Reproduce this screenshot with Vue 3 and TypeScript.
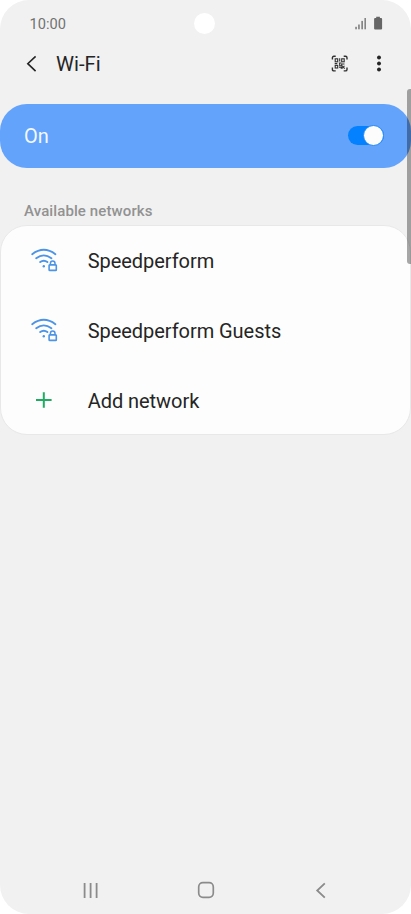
<script setup lang="ts">
import { ref } from 'vue'

interface Network {
  name: string
}

const wifiOn = ref<boolean>(true)
const networks: Network[] = [{ name: 'Speedperform' }, { name: 'Speedperform Guests' }]
</script>

<template>
  <main class="phone">
    <div class="status">
      <span class="time">10:00</span>
      <span class="camera"></span>
      <svg class="status-icons" width="30" height="16" viewBox="354 15.5 30 16">
        <g fill="#858585">
          <rect x="355.2" y="26.3" width="1.7" height="2.5" />
          <rect x="358.1" y="24" width="1.7" height="4.8" />
          <rect x="361.3" y="20.4" width="1.7" height="8.4" />
          <rect x="364.4" y="17.5" width="1.6" height="11.3" />
        </g>
        <path d="M376.2 16.3h3.7v1.2h1.2q1 0 1 1v9.4q0 1-1 1h-6q-1 0-1-1v-9.4q0-1 1-1h1.1z" fill="#666" />
      </svg>
    </div>

    <header class="header">
      <svg class="back" width="12" height="18" viewBox="26 55 12 18">
        <path d="M35.6 56.3 27.8 63.7 35.6 71.1" fill="none" stroke="#252525" stroke-width="1.6" />
      </svg>
      <h1>Wi-Fi</h1>
      <svg class="qr" width="16" height="16" viewBox="0.3 0.4 16 16">
        <g fill="none" stroke="#303030" stroke-width="1.4">
          <path d="M.7 4V2.2Q.7.7 2.2.7H4M12 .7h1.8q1.5 0 1.5 1.5V4M15.3 12v1.8q0 1.5-1.5 1.5H12M4 15.3H2.2q-1.5 0-1.5-1.5V12" />
          <g stroke-width="1.1">
            <rect x="3.5" y="3.2" width="2.5" height="3" />
            <rect x="10" y="3.2" width="2.5" height="3" />
            <rect x="3.5" y="9.8" width="2.5" height="2.6" />
            <path d="M8 2.6v3.2M7.2 7.4h2.4M3 8h2.6M8 8v2.2h2V8.4h2.8M7.3 11.6h2.2v1.6M10.5 10v3.1M12.8 10.2l-1.4 1.2 1.6 1.6" />
          </g>
        </g>
      </svg>
      <svg class="more" width="6" height="18" viewBox="0 0.3 6 18" fill="#252525">
        <circle cx="3" cy="2.8" r="1.95" />
        <circle cx="3" cy="8.8" r="1.95" />
        <circle cx="3" cy="14.8" r="1.95" />
      </svg>
    </header>

    <section class="switch-bar" @click="wifiOn = !wifiOn">
      <span>{{ wifiOn ? 'On' : 'Off' }}</span>
      <span class="toggle" :class="{ off: !wifiOn }"><i></i></span>
    </section>

    <h2>Available networks</h2>

    <ul class="card">
      <li v-for="network in networks" :key="network.name">
        <svg class="icon" width="28" height="26" viewBox="30 248 28 26">
          <g fill="none" stroke="#4c94e6" stroke-width="1.9" stroke-linecap="round">
            <path d="M32.2 254.2Q43.8 245.4 55.4 254.2" />
            <path d="M36.2 258.2Q43.8 252.6 51.4 258.2" />
            <path d="M40.2 262.1Q43.8 259.4 47.4 262.1" />
            <rect x="49.1" y="264.9" width="7.2" height="5.5" rx=".7" stroke-width="1.6" />
            <path d="M50.4 264.6V263.4a2.3 2.3 0 0 1 4.6 0v1.2" stroke-width="1.5" />
          </g>
          <circle cx="43.8" cy="266.2" r="1.2" fill="#4c94e6" />
        </svg>
        <span>{{ network.name }}</span>
      </li>
      <li>
        <svg class="icon" width="28" height="26" viewBox="30 388 28 26">
          <path d="M36 400h15.6M43.8 392.2v15.6" fill="none" stroke="#1fac62" stroke-width="2" />
        </svg>
        <span>Add network</span>
      </li>
    </ul>

    <nav class="nav">
      <svg width="16" height="18" viewBox="83 881 16 18">
        <path d="M84.6 883v15M90.6 883v15M96.6 883v15" stroke="#8b8b8b" stroke-width="1.8" />
      </svg>
      <svg width="18" height="18" viewBox="1 0 18 18">
        <rect x="1.7" y="1.7" width="14.6" height="14.6" rx="4.2" fill="none" stroke="#8b8b8b" stroke-width="1.7" />
      </svg>
      <svg width="12" height="18" viewBox="315 881 12 18">
        <path d="M324.8 883.3 317.2 890.5 324.8 897.7" fill="none" stroke="#8b8b8b" stroke-width="1.8" />
      </svg>
    </nav>
    <div class="scrollbar"></div>
  </main>
</template>

<style>
body {
  background: #fff;
}
</style>

<style scoped>
.phone {
  position: relative;
  box-sizing: border-box;
  display: flex;
  flex-direction: column;
  width: 411px;
  height: 914px;
  overflow: hidden;
  border-radius: 29px;
  background: #f1f1f1;
  color: #252525;
  font-family: Roboto, "Liberation Sans", sans-serif;
}
svg {
  display: block;
  flex: none;
  overflow: visible;
}
.status {
  display: grid;
  grid-template-columns: 1fr 21px 1fr;
  align-items: center;
  height: 47px;
  padding: 0 27px 0 29px;
}
.time {
  padding-left: 0.5px;
  color: #717171;
  font-size: 14.6px;
}
.camera {
  width: 21px;
  height: 21px;
  margin-left: -1.6px;
  border-radius: 50%;
  background: #fff;
}
.status-icons {
  justify-self: end;
}
.header {
  display: flex;
  align-items: center;
  height: 34px;
  padding: 0 29px 0 26px;
}
h1 {
  flex: 1;
  margin: 0 0 0 18px;
  font-size: 20.3px;
  font-weight: 400;
  line-height: 24px;
}
.more {
  margin-left: 28px;
}
.switch-bar {
  display: flex;
  align-items: center;
  justify-content: space-between;
  box-sizing: border-box;
  height: 64px;
  margin-top: 22.5px;
  padding: 0 27px 0 24px;
  border-radius: 27px;
  background: #63a3fc;
  color: #f4f9ff;
  font-size: 20px;
}
.toggle {
  display: flex;
  align-items: center;
  justify-content: flex-end;
  width: 36px;
  height: 19px;
  border-radius: 10px;
  background: #0381fe;
}
.toggle.off {
  justify-content: flex-start;
  background: #8a8a8a;
}
.toggle i {
  box-sizing: border-box;
  flex: none;
  width: 21.4px;
  height: 21.4px;
  border: 1px solid #2389f5;
  border-radius: 50%;
  background: #fcfcfc;
}
h2 {
  margin: 33.5px 0 0 24px;
  color: #929292;
  font-size: 15px;
  font-weight: 500;
  letter-spacing: 0.11px;
  line-height: 20px;
}
.card {
  box-sizing: border-box;
  height: 210px;
  margin: 4px 0 0;
  padding: 0;
  border: 1px solid #e8e8e8;
  border-radius: 27px;
  background: #fdfdfd;
  list-style: none;
}
.card li {
  display: flex;
  align-items: center;
  height: 70px;
  padding-left: 29px;
  font-size: 20px;
  letter-spacing: -0.05px;
}
.card span {
  margin-left: 29.7px;
}
.nav {
  display: flex;
  justify-content: space-between;
  margin: auto 84px 15px 83px;
}
.scrollbar {
  position: absolute;
  top: 89px;
  right: 0;
  width: 4px;
  height: 175px;
  border-radius: 3px 0 0 3px;
  background: rgba(0, 0, 0, 0.34);
}
</style>
